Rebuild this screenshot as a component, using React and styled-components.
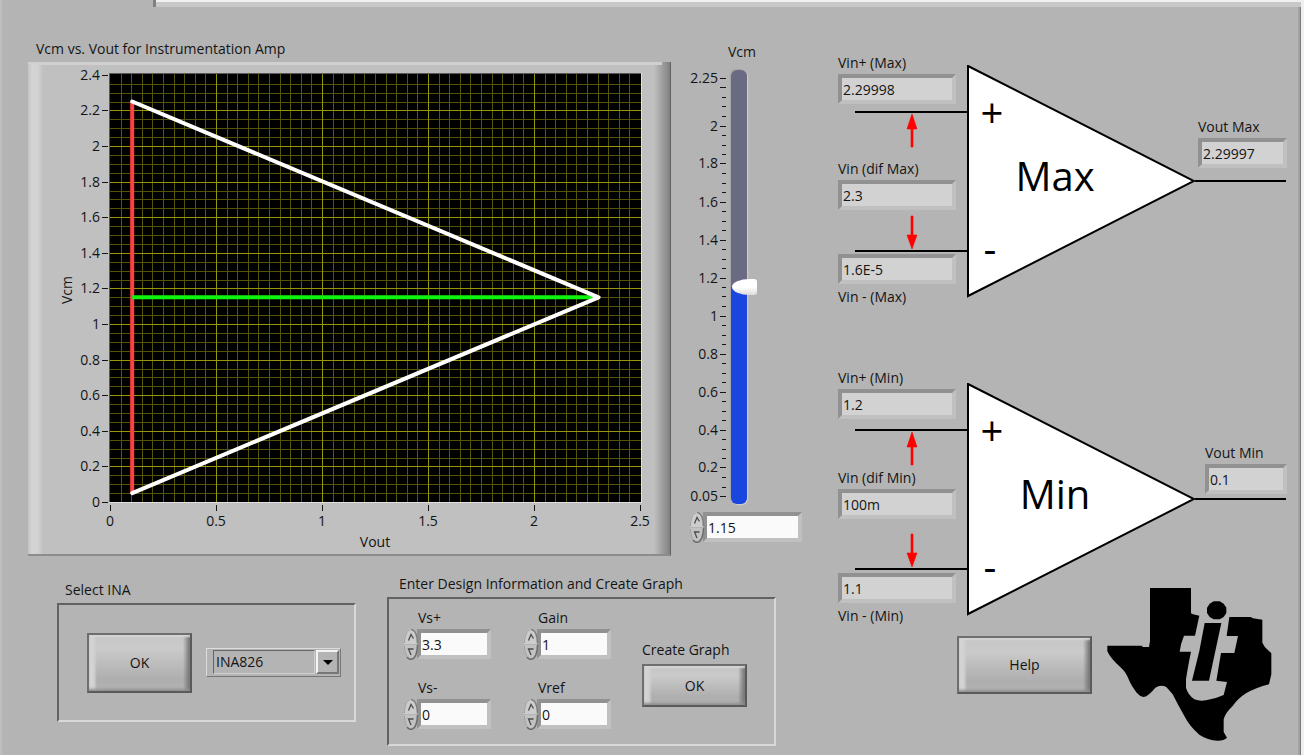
import React from 'react'
import styled, {createGlobalStyle} from 'styled-components'

const GlobalStyle = createGlobalStyle`
    * {
        box-sizing: border-box;
    }
    body {
        margin: 0;
        background-color: #b4b4b4;
        color: #141414;
        font-family: "Open Sans", "Noto Sans", sans-serif;
        font-size: 14px;
        line-height: 20px;
    }
    button, input, select {
        font: inherit;
        color: inherit;
        border-radius: 0;
    }
`

const Page = styled.div`
    min-height: 100vh;
    display: flex;
    flex-direction: column;
    border-right: 3px solid #f0f0f0;
    background-color: #b4b4b4;
`

const TabStrip = styled.div`
    display: flex;
    height: 7px;
`

const ActiveTab = styled.div`
    width: 156px;
    border-left: 2px solid #bebebe;
    border-right: 3px solid #808080;
`

const TabSpace = styled.div`
    flex: 1;
    border-top: 2px solid #f0f0f0;
    background-color: #c8c8c8;
`

const Content = styled.main`
    flex: 1;
    display: flex;
    gap: 36px;
    padding: 32px 13px 7px 26px;
    border-left: 2px solid #bebebe;
    border-right: 1px solid #787878;
    box-shadow: inset -2px 0 0 #a2a2a2;
`

const LeftColumn = styled.div`
    flex: 1;
    min-width: 0;
`

const RightColumn = styled.div`
    width: 449px;
    padding-top: 14px;
`

const TopRow = styled.div`
    display: flex;
    gap: 18px;
`

const BottomRow = styled.div`
    display: flex;
    align-items: flex-start;
    gap: 31px;
    padding: 18px 0 0 29px;
`

const GraphSection = styled.section`
    flex: 1;
    min-width: 0;
`

const Title = styled.h2`
    margin: 0;
    padding-left: ${props => props.$inset || 8}px;
    font-size: 14px;
    font-weight: 400;
    white-space: nowrap;
`

const GraphFrame = styled.div`
    margin-top: 3px;
    border-bottom: 2px solid #8c8c8c;
    border-right: 1px solid #606060;
    background:
        linear-gradient(#d0d0d0, #d0d0d0) 0 0 / calc(100% - 8px) 3px no-repeat,
        linear-gradient(to right, #c4c4c4, #d4d4d4 4px, #d2d2d2 10px, #c0c0c0 15px, #c0c0c0 calc(100% - 16px), #808080);
    svg {
        display: block;
        width: 100%;
        height: auto;
    }
`

const SliderSection = styled.section`
    width: 113px;
    padding-top: 3px;
`

const SliderLabel = styled.label`
    display: block;
    padding: 0 0 8px 39px;
`

const SliderBody = styled.div`
    display: flex;
    gap: 4px;
    height: 434px;
    margin-bottom: 8px;
`

const Range = styled.input`
    appearance: none;
    writing-mode: vertical-lr;
    direction: rtl;
    width: 26px;
    height: 434px;
    margin: 0;
    background: transparent;
    &::-webkit-slider-runnable-track {
        width: 16px;
        height: 434px;
        margin-right: 10px;
        border-radius: 6px;
        box-shadow: 1px 1px 1px #cfcfcf, -1px -1px 1px #a4a4a4;
        background: linear-gradient(to top, #1a46e0 var(--fill), #6a6a82 var(--fill));
    }
    &::-webkit-slider-thumb {
        appearance: none;
        width: 25px;
        height: 16px;
        margin-left: 1px;
        border-radius: 18px 3px 3px 18px / 8px 3px 3px 8px;
        background: linear-gradient(#fff 50%, #dcdcdc);
    }
`

const NumericBox = styled.div`
    display: flex;
    align-items: center;
    height: 30px;
`

const Spinner = styled.div`
    width: 15px;
    display: flex;
    flex-direction: column;
    gap: 1px;
    flex-shrink: 0;
    margin-right: -1px;
    position: relative;
`

const SpinButton = styled.button`
    display: block;
    width: 16px;
    height: 15px;
    padding: 0;
    border: 0;
    background: transparent;
    svg {
        display: block;
    }
`

const Field = styled.input`
    width: ${props => props.$width}px;
    height: 30px;
    padding: 0 1px;
    border: 4px solid;
    border-color: #919191 #c0c0c0 #c0c0c0 #919191;
    outline: 0;
    background-color: ${props => props.readOnly ? '#d2d2d2' : '#fafafa'};
`

const Stack = styled.div`
    display: flex;
    flex-direction: column;
    gap: 1px;
`

const Panel = styled.div`
    display: flex;
    margin-top: 3px;
    border: 2px solid;
    border-color: #626262 #d8d8d8 #d8d8d8 #626262;
`

const SelectPanel = styled(Panel)`
    width: 299px;
    height: 119px;
    padding: 0 13px 0 28px;
    align-items: center;
    justify-content: space-between;
`

const SelectGroup = styled.section`
    margin-top: 6px;
`

const DesignPanel = styled(Panel)`
    width: 389px;
    height: 149px;
    padding: 9px 27px 0 14px;
    justify-content: space-between;
`

const DesignFields = styled.div`
    display: grid;
    grid-template-columns: 88px 88px;
    column-gap: 32px;
    row-gap: 19px;
    align-content: start;
`

const FieldLabel = styled.label`
    padding-left: ${props => props.$inset || 0}px;
    white-space: nowrap;
`

const CreateGroup = styled.div`
    display: flex;
    flex-direction: column;
    gap: 4px;
    padding-top: 32px;
`

const BevelButton = styled.button`
    width: ${props => props.$width}px;
    height: ${props => props.$height}px;
    border: 2px solid;
    border-color: #6e6e6e #5a5a5a #5a5a5a #6e6e6e;
    box-shadow: inset 0 -3px 3px -1px #8e8e8e, inset 0 3px 2px -1px #d6d6d6;
    background:
        linear-gradient(to right, #d8d8d8, #d0d0d0 5px, transparent 8px, transparent calc(100% - 7px), #707070),
        linear-gradient(#c6c6c6, #cacaca 25%, #aeaeae 80%, #b4b4b4);
    cursor: pointer;
    &:active {
        filter: brightness(0.9);
    }
`

const RingBox = styled.div`
    display: grid;
    width: 135px;
    height: 29px;
    padding: 1px 1px 2px 6px;
    border: 1px solid;
    border-color: #dcdcdc #777 #777 #dcdcdc;
`

const Ring = styled.select`
    grid-area: 1 / 1;
    appearance: none;
    height: 24px;
    margin-right: 24px;
    padding: 0 0 0 2px;
    border: 1px solid;
    border-color: #666 #d0d0d0 #d0d0d0 #666;
    background: transparent;
    outline: 0;
`

const RingArrow = styled.span`
    grid-area: 1 / 1;
    justify-self: end;
    display: flex;
    align-items: center;
    justify-content: center;
    width: 23px;
    height: 24px;
    border: 2px solid;
    border-color: #f4f4f4 #777 #777 #f4f4f4;
    pointer-events: none;
`

const Amp = styled.section`
    display: flex;
    margin-bottom: ${props => props.$after}px;
`

const Inputs = styled.div`
    width: 129px;
    svg {
        display: block;
    }
`

const BottomStack = styled(Stack)`
    gap: 3px;
`

const Triangle = styled.svg`
    flex-shrink: 0;
    display: block;
    margin-top: ${props => props.$top}px;
`

const Output = styled.div`
    flex: 1;
    display: flex;
    flex-direction: column;
    padding-top: ${props => props.$top}px;
`

const OutputTop = styled.div`
    height: 115px;
    display: flex;
    align-items: flex-end;
    justify-content: flex-end;
    padding-bottom: ${props => props.$gap}px;
`

const OutputWire = styled.div`
    height: 2px;
    margin-right: 1px;
    background-color: #000;
`

const Footer = styled.footer`
    display: flex;
    align-items: center;
    justify-content: flex-end;
    gap: 15px;
    margin-top: -38px;
    padding-right: 15px;
`

const PLOT = {left: 82, top: 12}
const px = v => 82 + v * 212
const py = v => 440 - v * 178
const range = (count, step) => Array.from({length: count}, (_, i) => Math.round(i * step * 100) / 100)

function Chart() {
    return (
        <svg viewBox="0 0 642 492" role="img" aria-label="Vcm vs. Vout">
            <rect x={PLOT.left - 1} y={PLOT.top - 1} width="533" height="430" fill="#e0e0e0" />
            <rect x={PLOT.left - 1} y={PLOT.top - 1} width="532" height="429" fill="#5a5a5a" />
            <rect x={PLOT.left} y={PLOT.top} width="531" height="428" fill="#000" />
            <g shapeRendering="crispEdges">
                {range(50, 0.05).slice(1).map((v, i) => (
                    (i + 1) % 10 ? <rect key={v} x={Math.round(px(v))} y={PLOT.top} width="1" height="428" fill="#54540a" /> : null
                ))}
                {range(48, 0.05).slice(1).map((v, i) => (
                    (i + 1) % 4 ? <rect key={v} x={PLOT.left} y={Math.round(py(v))} width="531" height="1" fill="#54540a" /> : null
                ))}
                {range(5, 0.5).slice(1).map(v => (
                    <rect key={v} x={Math.round(px(v))} y={PLOT.top} width="1" height="428" fill="#969606" />
                ))}
                {range(12, 0.2).slice(1).map(v => (
                    <rect key={v} x={PLOT.left} y={Math.round(py(v))} width="531" height="1" fill="#969606" />
                ))}
            </g>
            <line x1={px(0.1) + 1} y1={py(2.25)} x2={px(0.1) + 1} y2={py(0.05)} stroke="#ff4040" strokeWidth="4" />
            <line x1={px(0.1) + 1} y1={py(1.15)} x2={px(2.3)} y2={py(1.15)} stroke="#0df50d" strokeWidth="4" />
            <polyline
                points={`${px(0.1) + 1},${py(2.25)} ${px(2.3) + 1},${py(1.15)} ${px(0.1) + 1},${py(0.05)}`}
                fill="none" stroke="#fff" strokeWidth="4" strokeLinecap="round" strokeLinejoin="round"
            />
            <g fill="#141414" fontSize="14">
                {range(13, 0.2).map(v => (
                    <g key={v}>
                        <rect x="74" y={Math.round(py(v))} width="6" height="1" />
                        <text x="72" y={Math.round(py(v)) + 5} textAnchor="end">{v}</text>
                    </g>
                ))}
                {range(6, 0.5).map(v => (
                    <g key={v}>
                        <rect x={Math.round(px(v))} y="443" width="1" height="6" />
                        <text x={px(v)} y="464" textAnchor="middle">{v}</text>
                    </g>
                ))}
                <text x="347" y="485" textAnchor="middle">Vout</text>
                <text transform="translate(44 228) rotate(-90)" textAnchor="middle">Vcm</text>
            </g>
        </svg>
    )
}

const sy = v => Math.round(8 + (2.25 - v) * 190)

function Scale() {
    const labelled = [2.25, 2, 1.8, 1.6, 1.4, 1.2, 1, 0.8, 0.6, 0.4, 0.2, 0.05]
    return (
        <svg width="38" height="434" overflow="visible" aria-hidden="true">
            {range(46, 0.05).slice(1).map(v => {
                const major = labelled.includes(v) || v === 2.2
                return <rect key={v} x={major ? 31 : 33} y={sy(v)} width={major ? 6 : 4} height="1" fill="#141414" />
            })}
            {labelled.map(v => (
                <text key={v} x="29" y={sy(v) + 5} textAnchor="end" fontSize="14" fill="#141414">{v}</text>
            ))}
        </svg>
    )
}

function Numeric({id, value, onChange, width, step = 1}) {
    const bump = dir => onChange(String(Math.round((Number(value) + dir * step) * 100) / 100))
    return (
        <NumericBox>
            <Spinner>
                <SpinButton type="button" aria-label="Increase" onClick={() => bump(1)}>
                    <svg width="16" height="15" viewBox="0 0 16 15">
                        <path d="M1 15C1 6 4 0 8 0s7 6 7 15z" fill="#cdcdcd" />
                        <path d="M8 .5c4 0 6.500 6 6.500 14" fill="none" stroke="#7c7c7c" strokeWidth="1.500" />
                        <path d="M1.500 14C1.500 7 4 1 7.500 .8" fill="none" stroke="#a0a0a0" />
                        <path d="M5.500 11.500l2.500-6 2.500 4" fill="none" stroke="#4c4c4c" strokeWidth="1.300" />
                    </svg>
                </SpinButton>
                <SpinButton type="button" aria-label="Decrease" onClick={() => bump(-1)}>
                    <svg width="16" height="15" viewBox="0 0 16 15">
                        <path d="M1 0C1 9 4 15 8 15s7-6 7-15z" fill="#c2c2c2" />
                        <path d="M4 12c1 1.500 2.500 2.300 4 2.300C12 14.300 14.500 8 14.500 0" fill="none" stroke="#6c6c6c" strokeWidth="1.500" />
                        <path d="M1.500 1C1.500 5 2.500 9 4 11.500" fill="none" stroke="#a0a0a0" />
                        <path d="M10.500 4h-5l2.500 6" fill="none" stroke="#4c4c4c" strokeWidth="1.300" />
                    </svg>
                </SpinButton>
            </Spinner>
            <Field id={id} $width={width} inputMode="decimal" value={value} onChange={e => onChange(e.target.value)} />
        </NumericBox>
    )
}

function LabeledNumeric({id, label, initial}) {
    const [value, setValue] = React.useState(initial)
    return (
        <Stack>
            <FieldLabel htmlFor={id} $inset={15}>{label}</FieldLabel>
            <Numeric id={id} value={value} onChange={setValue} width={74} />
        </Stack>
    )
}

function WireUp({height, wire}) {
    return (
        <svg width="129" height={height} aria-hidden="true">
            <rect x="17" y={wire - 1} width="112" height="2" />
            <path d={`M74 ${wire + 2}l5 15h-4v18h-2v-18h-4z`} fill="red" stroke="red" strokeWidth=".6" />
        </svg>
    )
}

function WireDown({height, wire}) {
    return (
        <svg width="129" height={height} aria-hidden="true">
            <rect x="17" y={wire - 1} width="112" height="2" />
            <path d={`M74 ${wire - 2}l5-14h-4v-19h-2v19h-4z`} fill="red" stroke="red" strokeWidth=".6" />
        </svg>
    )
}

function OpAmp({name, plus, diff, minus, out, outWidth, wires, outGap, after}) {
    const top = wires.plus + 4
    return (
        <Amp $after={after}>
            <Inputs>
                <Stack>
                    <FieldLabel htmlFor={`plus${name}`}>Vin+ ({name})</FieldLabel>
                    <Field id={`plus${name}`} $width={118} readOnly value={plus} />
                </Stack>
                <WireUp height={wires.upper} wire={wires.plus} />
                <Stack>
                    <FieldLabel htmlFor={`diff${name}`}>Vin (dif {name})</FieldLabel>
                    <Field id={`diff${name}`} $width={118} readOnly value={diff} />
                </Stack>
                <WireDown height={wires.lower} wire={wires.minus} />
                <BottomStack>
                    <Field id={`minus${name}`} $width={118} readOnly value={minus} />
                    <FieldLabel htmlFor={`minus${name}`}>Vin - ({name})</FieldLabel>
                </BottomStack>
            </Inputs>
            <Triangle $top={top} width="228" height="234" aria-label={`${name} amplifier`}>
                <path d="M1 1L227 116L1 231z" fill="#fff" stroke="#000" strokeWidth="2" />
                <text x="88" y="126" fontSize="40" textAnchor="middle">{name}</text>
                <text x="25" y="63" fontSize="40" textAnchor="middle">+</text>
                <text x="23" y="198" fontSize="40" textAnchor="middle">-</text>
            </Triangle>
            <Output $top={top}>
                <OutputTop $gap={outGap}>
                    <Stack>
                        <FieldLabel htmlFor={`out${name}`}>Vout {name}</FieldLabel>
                        <Field id={`out${name}`} $width={outWidth} readOnly value={out} />
                    </Stack>
                </OutputTop>
                <OutputWire />
            </Output>
        </Amp>
    )
}

function TexasLogo() {
    return (
        <svg width="165" height="154" viewBox="23 26 495 462" role="img" aria-label="Texas Instruments">
            <path d="M152 26H275V102L281 105L300 109L287 169H254Q243 195 241 217H275Q265 265 260 300V325Q265 345 285 360Q300 366 320 363Q350 358 373 347L383 308L351 304L365 221H405L416 170H382L390 113H454L461 117L489 121V190L497 204L516 222V285L509 315Q470 325 440 342Q415 358 400 380Q377 402 373 420V458L383 475Q375 484 355 484Q325 483 300 466Q270 440 255 410Q235 375 220 345Q208 330 200 322Q182 316 168 325Q148 350 133 353Q120 350 112 340Q95 318 88 300Q80 278 65 265Q35 240 24 216V199H129V203H149L152 185Z" />
            <path d="M316 131H366L329 304H278L300 215z" />
            <path d="M343 66h18l12 7 8 12v16l-8 12-12 7h-18l-12-7-8-12v-16l8-12z" />
        </svg>
    )
}

function App() {
    const [vcm, setVcm] = React.useState('1.15')
    const fill = (8 + (Number(vcm) - 0.05) * 190) / 434 * 100

    return (
        <Page>
            <GlobalStyle />
            <TabStrip>
                <ActiveTab />
                <TabSpace />
            </TabStrip>
            <Content>
                <LeftColumn>
                    <TopRow>
                        <GraphSection>
                            <Title>Vcm vs. Vout for Instrumentation Amp</Title>
                            <GraphFrame>
                                <Chart />
                            </GraphFrame>
                        </GraphSection>
                        <SliderSection>
                            <SliderLabel htmlFor="vcmSlider">Vcm</SliderLabel>
                            <SliderBody>
                                <Scale />
                                <Range
                                    id="vcmSlider" type="range" min="0.05" max="2.25" step="0.01"
                                    value={vcm} onChange={e => setVcm(e.target.value)}
                                    style={{'--fill': `${fill}%`}}
                                />
                            </SliderBody>
                            <Numeric id="vcm" value={vcm} onChange={setVcm} width={99} step={0.05} />
                        </SliderSection>
                    </TopRow>
                    <BottomRow>
                        <SelectGroup>
                            <Title>Select INA</Title>
                            <SelectPanel>
                                <BevelButton type="button" $width={105} $height={60}>OK</BevelButton>
                                <RingBox>
                                    <Ring defaultValue="INA826" aria-label="Select INA">
                                        <option>INA826</option>
                                    </Ring>
                                    <RingArrow>
                                        <svg width="10" height="5"><path d="M0 0h10L5 5z" /></svg>
                                    </RingArrow>
                                </RingBox>
                            </SelectPanel>
                        </SelectGroup>
                        <section>
                            <Title $inset={12}>Enter Design Information and Create Graph</Title>
                            <DesignPanel>
                                <DesignFields>
                                    <LabeledNumeric id="vsPlus" label="Vs+" initial="3.3" />
                                    <LabeledNumeric id="gain" label="Gain" initial="1" />
                                    <LabeledNumeric id="vsMinus" label="Vs-" initial="0" />
                                    <LabeledNumeric id="vref" label="Vref" initial="0" />
                                </DesignFields>
                                <CreateGroup>
                                    <FieldLabel htmlFor="create">Create Graph</FieldLabel>
                                    <BevelButton id="create" type="button" $width={105} $height={43}>OK</BevelButton>
                                </CreateGroup>
                            </DesignPanel>
                        </section>
                    </BottomRow>
                </LeftColumn>
                <RightColumn>
                    <OpAmp
                        name="Max" plus="2.29998" diff="2.3" minus="1.6E-5" out="2.29997"
                        outWidth={89} outGap={12} after={61}
                        wires={{upper: 55, plus: 8, lower: 44, minus: 41}}
                    />
                    <OpAmp
                        name="Min" plus="1.2" diff="100m" minus="1.1" out="0.1"
                        outWidth={82} outGap={4} after={0}
                        wires={{upper: 49, plus: 11, lower: 54, minus: 50}}
                    />
                    <Footer>
                        <BevelButton type="button" $width={135} $height={58}>Help</BevelButton>
                        <TexasLogo />
                    </Footer>
                </RightColumn>
            </Content>
        </Page>
    )
}

export default App
